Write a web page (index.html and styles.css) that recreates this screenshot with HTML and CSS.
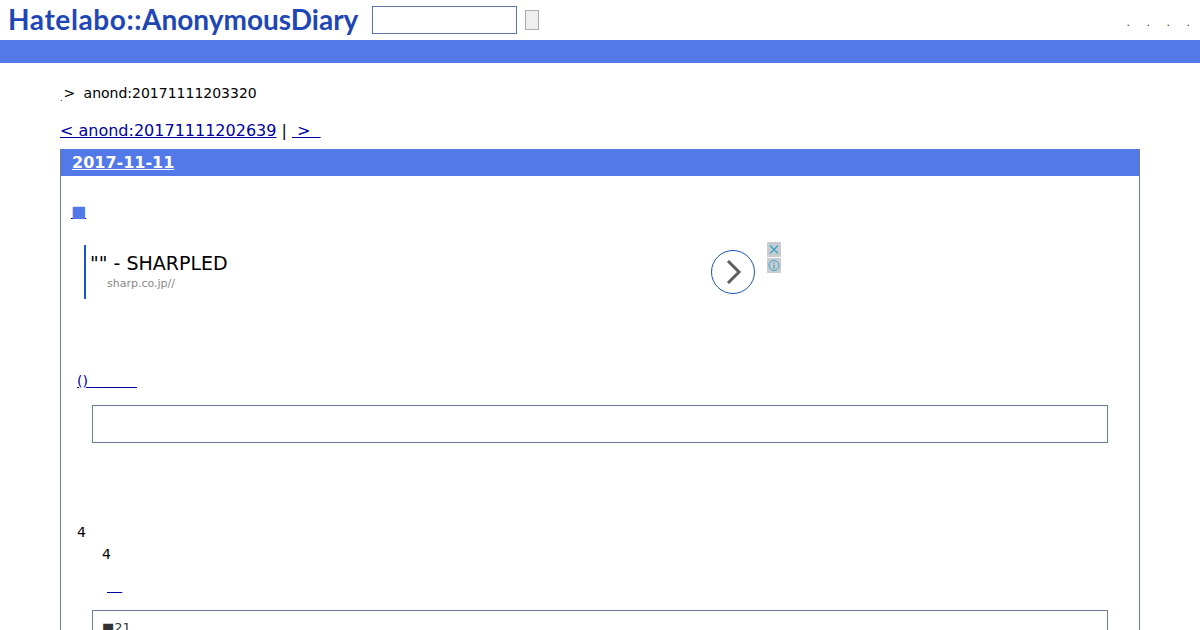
FILE: index.html
```html
<!DOCTYPE html>
<html lang="ja">
<head>
    <meta charset="UTF-8">
    <title>anond:20171111203320</title>
    <link rel="stylesheet" href="styles.css">
</head>
<body>
    <div class="header">
        <a class="logo" href="#"><span class="logoHead">Hatelabo::</span>AnonymousDiary</a>
        <input type="text" class="searchBox">
        <button class="searchBtn"></button>
        <div class="headerLinks">
            <a href="#">.</a>
            <a href="#">.</a>
            <a href="#">.</a>
            <a href="#">.</a>
        </div>
    </div>
    <div class="blueBar"></div>

    <div class="main">
        <div class="crumb"><span class="dot">.</span><span class="gt">&gt;</span><span>anond:20171111203320</span></div>
        <div class="pager"><a href="#">&lt; anond:20171111202639</a> | <a href="#">&nbsp;&gt;&nbsp;&nbsp;</a></div>

        <div class="day">
            <h2 class="dayTitle"><a href="#">2017-11-11</a></h2>
            <div class="dayBody">
                <div class="square"><a href="#">■</a></div>

                <div class="ad">
                    <div class="adText">
                        <div class="adTitle">"" - SHARPLED</div>
                        <div class="adUrl">sharp.co.jp//</div>
                    </div>
                    <div class="adArrow">
                        <svg width="44" height="44" viewBox="0 0 44 44">
                            <circle cx="22" cy="22" r="21.5" fill="none" stroke="#1a56b0" stroke-width="1"/>
                            <path d="M17 11 L28 22 L17 33" fill="none" stroke="#5f5f5f" stroke-width="3"/>
                        </svg>
                    </div>
                    <div class="adIcons">
                        <div class="adIcon">
                            <svg width="14" height="15" viewBox="0 0 14 15">
                                <path d="M3 3.5 L11 11.5 M11 3.5 L3 11.5" stroke="#3aa6c4" stroke-width="1.4"/>
                            </svg>
                        </div>
                        <div class="adIcon">
                            <svg width="14" height="15" viewBox="0 0 14 15">
                                <circle cx="7" cy="7.5" r="5" fill="none" stroke="#3aa6c4" stroke-width="1"/>
                                <path d="M7 4.6 V5.8 M7 6.8 V10.4" stroke="#3aa6c4" stroke-width="1.2"/>
                            </svg>
                        </div>
                    </div>
                </div>

                <div class="paren"><a href="#">()&nbsp;&nbsp;&nbsp;&nbsp;&nbsp;&nbsp;&nbsp;&nbsp;&nbsp;&nbsp;&nbsp;</a></div>
                <div class="quote quoteEmpty"></div>

                <div class="num">4</div>
                <div class="num numIndent">4</div>
                <div class="dash"><a href="#">&nbsp;&nbsp;&nbsp;&nbsp;</a></div>
                <div class="quote quoteLast">■21</div>
            </div>
        </div>
    </div>
</body>
</html>
```

FILE: styles.css
```css
html, body {
    height: 630px;
    overflow: hidden;
}
body {
    margin: 0;
    background-color: #fff;
    color: #000;
    font-family: "DejaVu Sans", sans-serif;
    font-size: 14px;
}
a {
    color: #0000a0;
}
.header {
    display: flex;
    align-items: center;
    height: 40px;
}
.logo {
    margin-left: 8px;
    margin-top: -2px;
    width: 352px;
    color: #1e46b4;
    font-family: Lato, sans-serif;
    font-size: 28px;
    font-weight: 700;
    text-decoration: none;
    white-space: nowrap;
}
.logoHead {
    letter-spacing: 0.6px;
}
.searchBox {
    box-sizing: border-box;
    width: 145px;
    height: 28px;
    margin: 0 0 0 12px;
    border: 1px solid #5b75a8;
    background-color: #fff;
}
.searchBtn {
    box-sizing: border-box;
    width: 14px;
    height: 20px;
    margin: 0 0 0 8px;
    padding: 0;
    border: 1px solid #aaa;
    background-color: #efefef;
}
.headerLinks {
    display: flex;
    gap: 16.5px;
    margin-left: auto;
    margin-right: 10px;
    margin-top: 4px;
    font-size: 11px;
}
.headerLinks a {
    color: #333;
    text-decoration: none;
}
.blueBar {
    height: 23px;
    background-color: #5279e7;
}
.main {
    padding: 0 60px;
}
.crumb {
    display: flex;
    align-items: center;
    height: 20px;
    margin-top: 20px;
}
.dot {
    font-size: 8px;
    align-self: flex-end;
}
.gt {
    width: 20px;
    margin-left: 1px;
}
.pager {
    margin-top: 18px;
    font-size: 16px;
    line-height: 19px;
}
.day {
    margin-top: 9px;
    height: 600px;
    border: 1px solid #6b7a99;
    border-top: 0;
}
.dayTitle {
    margin: 0;
    padding: 0 11px;
    height: 27px;
    background-color: #5279e7;
    font-size: 16px;
    line-height: 27px;
}
.dayTitle a {
    color: #fff;
}
.dayBody {
    padding: 0 31px 0 11px;
}
.square {
    margin-top: 26px;
    margin-left: -1px;
    font-size: 16px;
    line-height: 19px;
}
.square a {
    color: #5279e7;
    text-decoration-color: #0000a0;
}
.ad {
    display: flex;
    margin-top: 21px;
    margin-left: 12px;
    width: 697px;
    height: 76px;
}
.adText {
    width: 620px;
    height: 54px;
    margin-top: 3px;
    padding-left: 4px;
    border-left: 2px solid #1a56c4;
}
.adTitle {
    margin-top: 6px;
    font-size: 19px;
    line-height: 24px;
}
.adUrl {
    margin-left: 17px;
    margin-top: 1px;
    color: #888;
    font-size: 11px;
    line-height: 16px;
}
.adArrow {
    margin-left: 5px;
    margin-top: 8px;
}
.adIcons {
    margin-left: 12px;
}
.adIcon {
    width: 14px;
    height: 15px;
    margin-bottom: 1px;
    background-color: #c8ccd0;
}
.paren {
    margin-top: 55px;
    margin-left: 5px;
    font-size: 14px;
    line-height: 16px;
}
.quote {
    box-sizing: border-box;
    margin-left: 20px;
    border: 1px solid #6b7a99;
}
.quoteEmpty {
    height: 38px;
    margin-top: 16px;
}
.num {
    margin-left: 5px;
    line-height: 17px;
}
.quoteEmpty + .num {
    margin-top: 81px;
}
.numIndent {
    margin-left: 30px;
    margin-top: 5px;
}
.dash {
    margin-left: 35px;
    margin-top: 17px;
    font-size: 12px;
    line-height: 14px;
}
.quoteLast {
    margin-top: 16px;
    padding: 9px 9px;
    height: 100px;
    color: #333;
    font-size: 13px;
    line-height: 16px;
}
```
